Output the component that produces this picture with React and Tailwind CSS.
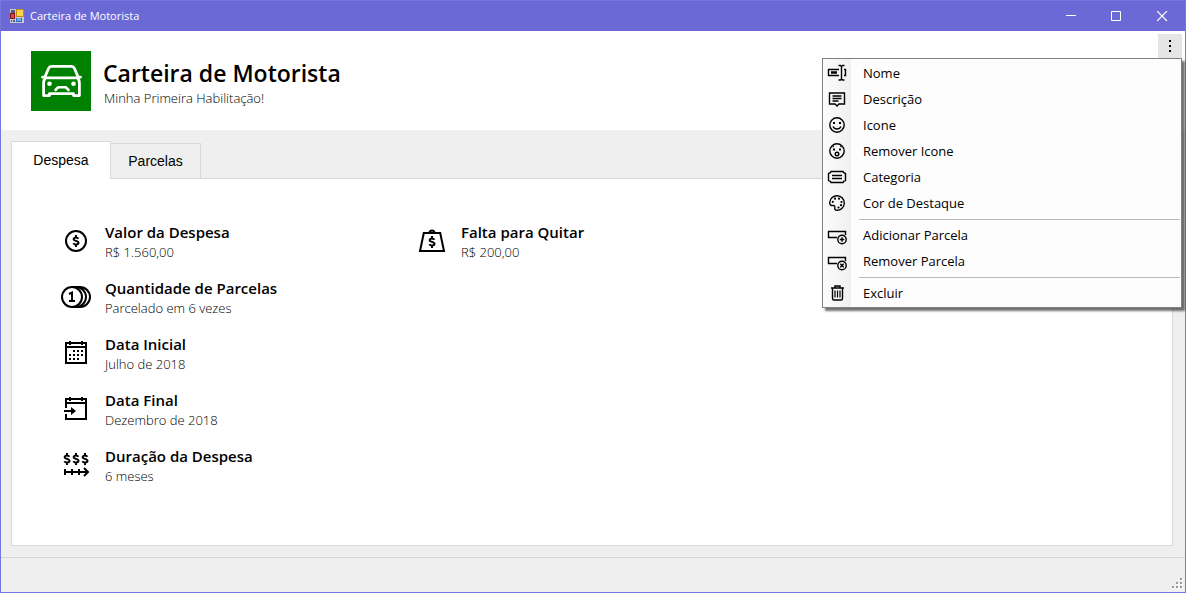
import { useState } from 'react';

function Dollar({ x, y }) {
  return (
    <g transform={`translate(${x} ${y})`}>
      <path d="M2.4 -2.2C1.8 -3.2 .9 -3.5 0 -3.5C-1.4 -3.5 -2.4 -2.8 -2.4 -1.8C-2.4 .2 2.5 -.5 2.5 1.8C2.5 2.9 1.5 3.5 0 3.5C-1.2 3.5 -2.1 3.1 -2.6 2.1M0 -6V-3.5M0 3.5V6" fill="none" stroke="currentColor" strokeWidth="2" />
    </g>
  );
}

function Svg({ children, size = 'size-8', box = '0 0 32 32', width = 2 }) {
  return (
    <svg className={`${size} shrink-0`} viewBox={box} fill="none" stroke="currentColor" strokeWidth={width} aria-hidden="true">
      {children}
    </svg>
  );
}

const CoinIcon = () => (
  <Svg>
    <circle cx="16" cy="16" r="10" />
    <Dollar x={16} y={16} />
  </Svg>
);

const CoinsIcon = () => (
  <Svg>
    <circle cx="12" cy="16" r="10" />
    <path d="M16 6a10 10 0 0 1 0 20M20 6a10 10 0 0 1 0 20M12 6h8M12 26h8" />
    <path d="M9 13l3-1.500v9M9 20h6" />
  </Svg>
);

const CalendarIcon = () => (
  <Svg>
    <path d="M6 6h20v20H6zM6 10h20M10 4v4M22 4v4" />
    <path d="M13 14h2m2 0h2m2 0h2M9 18h2m2 0h2m2 0h2m2 0h2M9 22h2m2 0h2m2 0h2" />
  </Svg>
);

const CalendarEndIcon = () => (
  <Svg>
    <path d="M6 15V6h20v20H6v-5M6 10h20M10 4v4M22 4v4M4 18h10" />
    <path d="M11 14l5 4-5 4z" fill="currentColor" stroke="none" />
  </Svg>
);

const DurationIcon = () => (
  <Svg>
    <Dollar x={7} y={10} />
    <Dollar x={16} y={10} />
    <Dollar x={25} y={10} />
    <path d="M4 23h24M5 20v6M12 20v6M19 20v6M24 19l4 4-4 4" />
  </Svg>
);

const WeightIcon = () => (
  <Svg>
    <path d="M7.8 8h16.4L28 26H4z" />
    <path d="M13.500 8a2.500 2.500 0 1 1 5 0" />
    <Dollar x={16} y={17} />
  </Svg>
);

const CarIcon = () => (
  <svg className="size-15 shrink-0 bg-[#008000]" viewBox="0 0 60 60" fill="none" stroke="#fff" strokeWidth="2.8" strokeLinejoin="round" strokeLinecap="round" aria-hidden="true">
    <path d="M13.500 27L17.500 17.500Q18.500 15.400 21 15.400H40Q42.500 15.400 43.500 17.500L47.500 27" />
    <path d="M11.500 26.200H14M47 26.200H49.500" />
    <path d="M15 26.800H46M14.500 27Q12.600 29 12.600 32V44.600H18.500V42.600H42.500V44.600H48.400V32Q48.400 29 46.500 27" />
    <path d="M24.500 39L27 36.300H35L37.500 39" strokeWidth="2.600" />
    <circle cx="18.500" cy="32.800" r="2.300" fill="#fff" stroke="none" />
    <circle cx="42.500" cy="32.800" r="2.300" fill="#fff" stroke="none" />
  </svg>
);

function MenuSvg({ children }) {
  return (
    <Svg size="size-5" box="0 0 20 20" width={1.4}>
      {children}
    </Svg>
  );
}

const RenameIcon = () => (
  <MenuSvg>
    <path d="M12 6.500H1.500v6H12M17 6.500h1.500v6H17M11.500 2.500h2l1 1 1-1h2M14.500 3.500v12M11.500 17h2l1-1 1 1h2" />
    <path d="M4 9.500h6" strokeWidth="2.500" />
  </MenuSvg>
);

const DescriptionIcon = () => (
  <MenuSvg>
    <path d="M2.500 4h15v11H12l-2 2-2-2H2.500zM5.500 7h9M5.500 9.500h9M5.500 12h6" />
  </MenuSvg>
);

const SmileIcon = () => (
  <MenuSvg>
    <circle cx="10" cy="10" r="7.200" />
    <path d="M6 11.500q1.200 2.500 4 2.500t4-2.500" />
    <path d="M7 7v2M13 7v2" strokeWidth="2" />
  </MenuSvg>
);

const SurprisedIcon = () => (
  <MenuSvg>
    <circle cx="10" cy="10" r="7.200" />
    <circle cx="10" cy="13" r="1.800" />
    <path d="M7 7.500v2M13 7.500v2" strokeWidth="2" />
    <path d="M5.500 6l1.500-1M14.500 6L13 5" strokeWidth="1" />
  </MenuSvg>
);

const TagIcon = () => (
  <MenuSvg>
    <path d="M4 4.500h12q.3 1.500 2.500 2v7q-2.200.5-2.500 2H4q-.3-1.500-2.500-2v-7q2.200-.5 2.500-2z" />
    <path d="M5 8.500h10M5 11.500h10" />
  </MenuSvg>
);

const PaletteIcon = () => (
  <MenuSvg>
    <path d="M2.700 9.500a7.300 7.300 0 1 1 7.300 7.800c-2.200 0-2.500-1.600-2.200-2.900.2-1.400-.6-2.200-2-1.900C4.300 12.700 2.700 12.200 2.700 9.500z" />
    <g fill="currentColor" stroke="none">
      <circle cx="5.800" cy="8.800" r="1.100" />
      <circle cx="8" cy="5.700" r="1.100" />
      <circle cx="12" cy="5.700" r="1.100" />
      <circle cx="14.500" cy="9" r="1.100" />
      <circle cx="14" cy="12.200" r="1.100" />
      <circle cx="11.500" cy="14.500" r="1.100" />
    </g>
  </MenuSvg>
);

const AddRowIcon = () => (
  <MenuSvg>
    <path d="M10 12.500H1.500v-6h17V10" />
    <circle cx="15" cy="14.500" r="4.200" />
    <path d="M12.800 14.500h4.400M15 12.300v4.400" />
  </MenuSvg>
);

const RemoveRowIcon = () => (
  <MenuSvg>
    <path d="M10 12.500H1.500v-6h17V10" />
    <circle cx="15" cy="14.500" r="4.200" />
    <path d="M13.300 12.800l3.400 3.400M16.700 12.800l-3.400 3.400" />
  </MenuSvg>
);

const TrashIcon = () => (
  <MenuSvg>
    <path d="M4 5h13M8 5V3h5v2M5.500 5v10.500q0 1.500 1.500 1.500h7q1.500 0 1.500-1.500V5" />
    <path d="M8 7.500v7M10.500 7.500v7M13 7.500v7" strokeWidth="1.200" />
  </MenuSvg>
);

const menuGroups = [
  [
    ['Nome', RenameIcon],
    ['Descrição', DescriptionIcon],
    ['Icone', SmileIcon],
    ['Remover Icone', SurprisedIcon],
    ['Categoria', TagIcon],
    ['Cor de Destaque', PaletteIcon],
  ],
  [
    ['Adicionar Parcela', AddRowIcon],
    ['Remover Parcela', RemoveRowIcon],
  ],
  [['Excluir', TrashIcon]],
];

const columns = [
  [
    ['Valor da Despesa', 'R$ 1.560,00', CoinIcon],
    ['Quantidade de Parcelas', 'Parcelado em 6 vezes', CoinsIcon],
    ['Data Inicial', 'Julho de 2018', CalendarIcon],
    ['Data Final', 'Dezembro de 2018', CalendarEndIcon],
    ['Duração da Despesa', '6 meses', DurationIcon],
  ],
  [['Falta para Quitar', 'R$ 200,00', WeightIcon]],
];

function TitleBar() {
  return (
    <div className="flex h-[30px] items-center bg-[#6b69d6] pl-2 text-white">
      <svg className="size-4 shrink-0" viewBox="0 0 16 16" aria-hidden="true">
        <path d="M1 1h14v14H1z" fill="#c9c9d2" />
        <path d="M2 2h4v3H2zM2 12h1v2H2zM4 12h2v2H4z" fill="#5a5a88" />
        <path d="M7 1h8v8H7z" fill="#c08a10" />
        <path d="M8 2h6v6H8z" fill="#ffd24a" />
        <path d="M1 5h5v6H1z" fill="#8b1010" />
        <path d="M2 6h3v4H2z" fill="#d84a4a" />
        <path d="M7 10h6v4H7z" fill="#2d6fc4" />
        <path d="M8 10h4v3H8z" fill="#6fa8ee" />
      </svg>
      <span className="ml-[5px] text-[11px]">Carteira de Motorista</span>
      <div className="ml-auto flex h-full">
        <button type="button" aria-label="Minimizar" className="flex w-[46px] items-center justify-center">
          <svg className="size-[11px]" viewBox="0 0 11 11" stroke="currentColor" aria-hidden="true"><path d="M1 4.500h10" /></svg>
        </button>
        <button type="button" aria-label="Maximizar" className="flex w-[46px] items-center justify-center">
          <svg className="size-[11px]" viewBox="0 0 11 11" fill="none" stroke="currentColor" aria-hidden="true"><path d="M.5 .5h9v9h-9z" /></svg>
        </button>
        <button type="button" aria-label="Fechar" className="flex w-[46px] items-center justify-center">
          <svg className="size-[11px]" viewBox="0 0 11 11" stroke="currentColor" strokeWidth="1.200" aria-hidden="true"><path d="M0 0l10 10M10 0l-10 10" /></svg>
        </button>
      </div>
    </div>
  );
}

function OptionsMenu() {
  return (
    <div role="menu" className="absolute top-full right-0 z-10 w-[360px] border border-[#808080] bg-[linear-gradient(to_right,#fcfcfc,#f0f0f0_28px,#fdfdfd_28px)] py-px shadow-[3px_3px_2px_rgba(0,0,0,0.55)]">
      {menuGroups.map((group, i) => (
        <div key={i} className={i > 0 ? 'pt-[6px] bg-[linear-gradient(#b8b8b8,#b8b8b8)] bg-no-repeat bg-[size:321px_1px] bg-[position:right_1px_top_3px]' : ''}>
          {group.map(([label, Icon]) => (
            <button key={label} type="button" role="menuitem" className="flex h-[26px] w-full items-center gap-4 pl-1 text-left text-[13px]">
              <Icon />
              <span className="pt-[2px]">{label}</span>
            </button>
          ))}
        </div>
      ))}
    </div>
  );
}

function Header() {
  const [open, setOpen] = useState(true);
  return (
    <header className="flex h-[99px] items-start gap-3 bg-white pt-5 pl-[30px]">
      <CarIcon />
      <div className="grow pt-[7px]">
        <h1 className="text-[23px] leading-[30px] font-semibold">Carteira de Motorista</h1>
        <p className="pl-px text-[13px] leading-5 font-light">Minha Primeira Habilitação!</p>
      </div>
      <div className="relative -mt-[17px] mr-[3px]">
        <button type="button" aria-label="Opções" aria-expanded={open} onClick={() => setOpen(!open)} className="flex size-6 items-center justify-center bg-[#e5e5e5]">
          <svg className="size-6" viewBox="0 0 24 24" aria-hidden="true"><path d="M11 6h2v2h-2zM11 11h2v2h-2zM11 16h2v2h-2z" /></svg>
        </button>
        {open && <OptionsMenu />}
      </div>
    </header>
  );
}

function Info({ title, value, Icon }) {
  return (
    <div className="flex h-10 items-center gap-[13px]">
      <Icon />
      <div className="pt-[2px]">
        <dt className="text-[15px] leading-5 font-semibold">{title}</dt>
        <dd className="text-[13px] leading-5 font-light">{value}</dd>
      </div>
    </div>
  );
}

export default function App() {
  return (
    <div className="flex min-h-screen flex-col border border-[#7876da] bg-[#efefef] font-['Open_Sans','Noto_Sans',sans-serif] text-black">
      <TitleBar />
      <Header />
      <main className="flex grow flex-col px-[10px] pt-[11px] pr-3 pb-[11px]">
        <div role="tablist" className="z-[1] -mb-px flex items-end font-['Liberation_Sans',sans-serif] text-sm">
          <button type="button" role="tab" aria-selected="true" className="h-[38px] w-[100px] border border-b-0 border-[#d9d9d9] bg-white pb-[2px]">Despesa</button>
          <button type="button" role="tab" aria-selected="false" className="h-9 w-[90px] border border-l-0 border-[#d9d9d9]">Parcelas</button>
        </div>
        <section role="tabpanel" className="grow border border-[#d9d9d9] bg-white px-12 py-[42px]">
          <div className="flex">
            {columns.map((items, i) => (
              <dl key={i} className="flex w-[356px] flex-col gap-4">
                {items.map(([title, value, Icon]) => (
                  <Info key={title} title={title} value={value} Icon={Icon} />
                ))}
              </dl>
            ))}
          </div>
        </section>
      </main>
      <footer className="flex h-[35px] items-end justify-end border-t border-[#d7d7d7] pr-px pb-[2px]">
        <svg className="size-3" viewBox="0 0 12 12" aria-hidden="true">
          <path d="M9 1h2v2H9zM5 5h2v2H5zM9 5h2v2H9zM1 9h2v2H1zM5 9h2v2H5zM9 9h2v2H9z" fill="#fff" />
          <path d="M8 0h2v2H8zM4 4h2v2H4zM8 4h2v2H8zM0 8h2v2H0zM4 8h2v2H4zM8 8h2v2H8z" fill="#9a9a9a" />
        </svg>
      </footer>
    </div>
  );
}
